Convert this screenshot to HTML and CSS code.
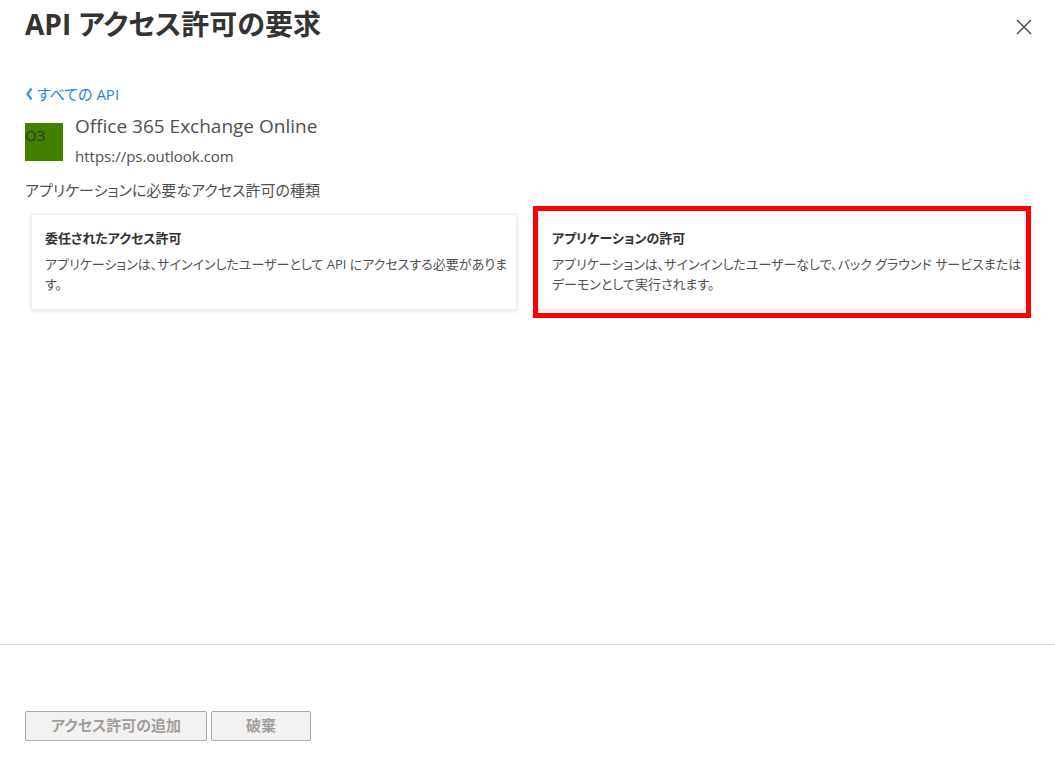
FILE: index.html
```
<!DOCTYPE html>
<html lang="ja">
<head>
  <meta charset="UTF-8" />
  <meta name="viewport" content="width=device-width, initial-scale=1.0" />
  <title>API アクセス許可の要求</title>
  <link rel="stylesheet" href="styles.css">
</head>
<body>
  <div class="panel">
    <header class="panel-header">
      <h1>API アクセス許可の要求</h1>
      <button type="button" class="close-btn" aria-label="閉じる">
        <svg width="16" height="16" viewBox="0 0 16 16" aria-hidden="true">
          <path d="M1 1 L15 15 M15 1 L1 15" fill="none" stroke="#444" stroke-width="1.4" />
        </svg>
      </button>
    </header>

    <main class="panel-content">
      <a href="#" class="back-link">
        <svg width="8" height="12" viewBox="0 0 8 12" aria-hidden="true">
          <path d="M6.5 0.5 L2.5 6 L6.5 11.5" fill="none" stroke="#1a86d9" stroke-width="2" />
        </svg>
        <span>すべての API</span>
      </a>

      <!-- Selected API -->
      <div class="api">
        <div class="api-logo">O3</div>
        <div>
          <h2 class="api-name">Office 365 Exchange Online</h2>
          <p class="api-url">https://ps.outlook.com</p>
        </div>
      </div>

      <p class="question">アプリケーションに必要なアクセス許可の種類</p>

      <!-- Permission types -->
      <div class="options">
        <div class="option">
          <button type="button" class="card">
            <span class="card-title">委任されたアクセス許可</span>
            <span class="card-text">アプリケーションは、サインインしたユーザーとして API にアクセスする必要があります。</span>
          </button>
        </div>
        <div class="option highlighted">
          <button type="button" class="card">
            <span class="card-title">アプリケーションの許可</span>
            <span class="card-text">アプリケーションは、サインインしたユーザーなしで、バック グラウンド サービスまたはデーモンとして実行されます。</span>
          </button>
        </div>
      </div>
    </main>

    <footer class="panel-footer">
      <button type="button" class="btn" disabled>アクセス許可の追加</button>
      <button type="button" class="btn" disabled>破棄</button>
    </footer>
  </div>
</body>
</html>
```
FILE: styles.css
```
* {
  box-sizing: border-box;
}

body {
  margin: 0;
  background: #fff;
  color: #505050;
  font-family: "Open Sans", "Noto Sans CJK JP", sans-serif;
  font-feature-settings: "palt";
}

h1,
h2,
p {
  margin: 0;
}

button {
  font: inherit;
  font-feature-settings: inherit;
  color: inherit;
}

.panel {
  display: flex;
  flex-direction: column;
  min-height: 100vh;
}

.panel-header {
  display: flex;
  justify-content: space-between;
  align-items: center;
  padding: 4px 20px 0 25px;
}

.panel-header h1 {
  font-size: 28px;
  line-height: 40px;
  font-weight: 700;
  color: #333;
}

.close-btn {
  display: flex;
  margin-top: 6px;
  padding: 3px;
  border: none;
  background: none;
  cursor: pointer;
}

.panel-content {
  flex: 1;
  padding: 40px 24px 24px 25px;
}

.back-link {
  display: flex;
  align-items: center;
  gap: 4px;
  font-size: 15px;
  line-height: 20px;
  color: #1a86d9;
  text-decoration: none;
}

.api {
  display: flex;
  gap: 12px;
  margin-top: 7px;
}

.api-logo {
  width: 38px;
  height: 38px;
  margin-top: 12px;
  background: #428000;
  color: #333;
  font-size: 15px;
  line-height: 24px;
}

.api-name {
  font-size: 19px;
  line-height: 30px;
  font-weight: 400;
}

.api-url {
  font-size: 15px;
  line-height: 30px;
}

.question {
  margin-top: 7px;
  font-size: 15px;
  line-height: 24px;
}

.options {
  display: grid;
  grid-template-columns: 1fr 1fr;
  gap: 10px;
  margin-top: 4px;
}

.option {
  padding: 3px 1px;
  border: 5px solid transparent;
}

.option.highlighted {
  padding-left: 0;
  border-color: #f00;
}

.card {
  display: block;
  width: 100%;
  height: 100%;
  padding: 13px 0 15px 13px;
  border: 1px solid #eee;
  background: #fff;
  box-shadow: 0 1px 4px rgba(0, 0, 0, 0.12);
  text-align: left;
  cursor: pointer;
}

.card-title,
.card-text {
  display: block;
  font-size: 13px;
  line-height: 20px;
}

.card-title {
  margin-bottom: 6px;
  font-weight: 600;
  color: #333;
}

.panel-footer {
  display: flex;
  gap: 4px;
  padding: 66px 25px 24px;
  border-top: 1px solid #ddd;
}

.btn {
  min-width: 100px;
  height: 30px;
  padding: 0 25px 2px;
  border: 1px solid #aaa;
  border-radius: 2px;
  background: #f3f2f1;
  font-size: 15px;
  line-height: 26px;
  font-weight: 600;
  color: #a19f9d;
}
```
